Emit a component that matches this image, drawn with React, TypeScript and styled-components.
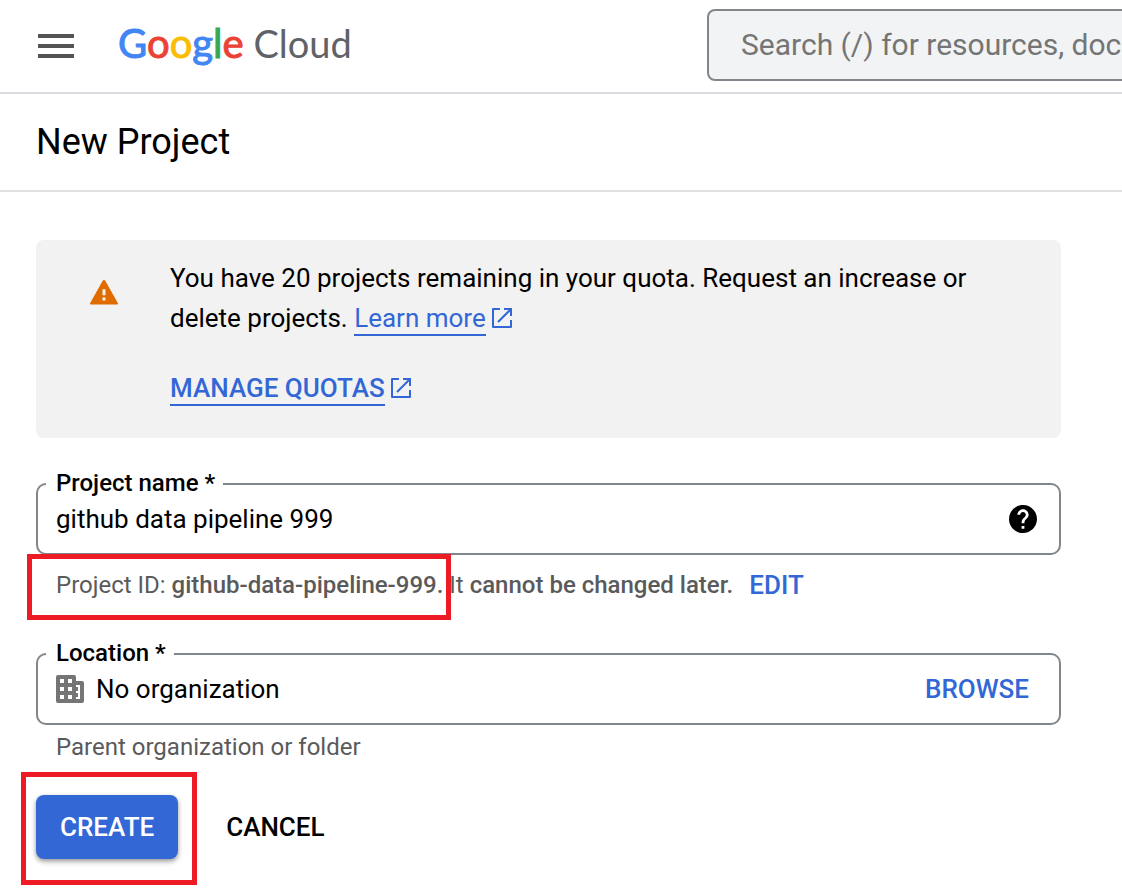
import React from "react";
import styled, { createGlobalStyle } from "styled-components";
import { MdHelp } from "react-icons/md";

const blue = "#3367d6";
const red = "#ed1c24";

const GlobalStyle = createGlobalStyle`
  * { box-sizing: border-box; }
  body {
    margin: 0;
    background: #fff;
    color: #000;
    font-family: Roboto, "Liberation Sans", sans-serif;
    font-size: 26px;
    line-height: 40px;
  }
  button, input { font: inherit; }
`;

const Header = styled.header`
  display: flex;
  align-items: center;
  height: 94px;
  padding: 0 0 2px 38px;
  border-bottom: 2px solid #dadae0;
  overflow: hidden;
`;

const MenuButton = styled.button`
  flex: none;
  display: flex;
  padding: 2px 0 0;
  border: 0;
  background: none;
  cursor: pointer;
`;

const LogoArea = styled.div`
  flex: none;
  width: 633px;
  padding: 0 0 4px 44px;
`;

const Logo = styled.a`
  color: #5f6368;
  font: 38px/56px Lato, sans-serif;
  text-decoration: none;
  white-space: nowrap;
`;

const Letter = styled.span<{ $color: string }>`
  color: ${(p) => p.$color};
  font-size: 40px;
  -webkit-text-stroke: 1px ${(p) => p.$color};
`;

const Search = styled.input`
  flex: none;
  width: 1440px;
  height: 72px;
  padding: 0 32px 2px;
  border: 2px solid #80868b;
  border-radius: 8px;
  background: #f1f3f4;
  font-size: 30px;
  &::placeholder { color: #757575; opacity: 1; }
`;

const TitleBar = styled.div`
  padding: 24px 36px;
  border-bottom: 2px solid #e0e0e0;
`;

const Title = styled.h1`
  margin: 0;
  font-size: 36px;
  line-height: 48px;
  font-weight: 400;
`;

const Main = styled.main`
  padding: 48px 61px 36px 36px;
`;

const Notice = styled.section`
  display: flex;
  gap: 52px;
  padding: 18px 54px 30px;
  border-radius: 8px;
  background: #f2f2f2;
`;

const NoticeIcon = styled.div`
  flex: none;
  display: flex;
  padding-top: 22px;
  color: #e06c00;
`;

const NoticeText = styled.p`
  margin: 0 0 30px;
`;

const TextLink = styled.a<{ $strong?: boolean }>`
  color: ${blue};
  font-weight: ${(p) => (p.$strong ? 500 : 400)};
  text-decoration: none;
  white-space: nowrap;
  svg {
    margin-left: 5px;
    vertical-align: -2px;
  }
`;

const LinkLabel = styled.span`
  padding-bottom: 1px;
  border-bottom: 2px solid ${blue};
`;

const Form = styled.form`
  padding-top: 45px;
`;

const Field = styled.div`
  position: relative;
  display: flex;
  align-items: center;
  gap: 12px;
  height: 72px;
  padding: 0 22px 0 18px;
  border: 2px solid #80868b;
  border-radius: 10px;
`;

const FieldLabel = styled.label`
  position: absolute;
  top: -16px;
  left: 8px;
  padding: 0 8px 0 10px;
  background: #fff;
  font-size: 24px;
  line-height: 28px;
  font-weight: 500;
`;

const FieldInput = styled.input`
  flex: 1;
  min-width: 0;
  padding: 0;
  border: 0;
  outline: 0;
  background: none;
  color: #000;
`;

const IconButton = styled.button`
  display: flex;
  padding: 0;
  border: 0;
  background: none;
  color: #000;
  cursor: pointer;
`;

const TextButton = styled.button<{ $color?: string }>`
  padding: 0 8px;
  border: 0;
  background: none;
  color: ${(p) => p.$color ?? blue};
  font-weight: 500;
  line-height: 40px;
  cursor: pointer;
`;

const Hint = styled.div`
  position: relative;
  display: flex;
  align-items: center;
  gap: 8px;
  padding-left: 20px;
  color: #5a5a5a;
  font-size: 24px;
  b { font-weight: 500; }
`;

const IdHint = styled(Hint)`
  padding-top: 10px;
  margin-bottom: 48px;
  button { font-size: 26px; }
`;

const LocationHint = styled(Hint)`
  padding-top: 2px;
`;

const Actions = styled.div`
  position: relative;
  display: flex;
  align-items: center;
  gap: 40px;
  margin-top: 28px;
`;

const CreateButton = styled.button`
  height: 64px;
  padding: 0 24px;
  border: 0;
  border-radius: 8px;
  background: ${blue};
  color: #fff;
  font-weight: 500;
  box-shadow: 0 2px 4px rgba(0, 0, 0, 0.3), 0 3px 6px rgba(0, 0, 0, 0.15);
  cursor: pointer;
`;

const Highlight = styled.span<{ $top: number; $left: number; $width: number; $height: number }>`
  position: absolute;
  top: ${(p) => p.$top}px;
  left: ${(p) => p.$left}px;
  width: ${(p) => p.$width}px;
  height: ${(p) => p.$height}px;
  border: 5px solid ${red};
  pointer-events: none;
`;

const WarningIcon = () => (
  <svg width="28" height="25" viewBox="0 0 28 25" fill="currentColor" fillRule="evenodd" aria-hidden="true">
    <path d="M12.7.8a1.5 1.5 0 0 1 2.6 0l12.5 22.2a1 1 0 0 1-.9 1.6H1.1a1 1 0 0 1-.9-1.6zM12.5 9.3v6h3v-6zM12.5 17.6v3h3v-3z" />
  </svg>
);

const ExternalIcon = () => (
  <svg width="22" height="22" viewBox="0 0 22 22" fill="none" stroke="currentColor" strokeWidth="2" aria-hidden="true">
    <path strokeLinejoin="round" d="M9 2H2v18h18v-7" />
    <path d="M13 2h7v7M20 2L7 15" />
  </svg>
);

const OrganizationIcon = () => (
  <svg width="28" height="28" viewBox="0 0 28 28" fill="#757575" fillRule="evenodd" aria-hidden="true">
    <path d="M2 0h16a2 2 0 0 1 2 2v4h6a2 2 0 0 1 2 2v18a2 2 0 0 1-2 2H2a2 2 0 0 1-2-2V2a2 2 0 0 1 2-2zM4 4v4h4V4zM12 4v4h4V4zM4 12v4h4v-4zM12 12v4h4v-4zM4 20v4h4v-4zM12 20v4h4v-4zM20 10v2h2v4h-2v2h2v4h-2v2h4V10z" />
  </svg>
);

export default function App() {
  return (
    <>
      <GlobalStyle />
      <Header>
        <MenuButton aria-label="Navigation menu">
          <svg width="36" height="24" fill="#545454" aria-hidden="true">
            <path d="M0 0h36v4H0zM0 10h36v4H0zM0 20h36v4H0z" />
          </svg>
        </MenuButton>
        <LogoArea>
          <Logo href="#" aria-label="Google Cloud">
            <Letter $color="#4285f4">G</Letter>
            <Letter $color="#ea4335">o</Letter>
            <Letter $color="#fbbc04">o</Letter>
            <Letter $color="#4285f4">g</Letter>
            <Letter $color="#34a853">l</Letter>
            <Letter $color="#ea4335">e</Letter>
            {" Cloud"}
          </Logo>
        </LogoArea>
        <Search type="search" aria-label="Search" placeholder="Search (/) for resources, docs, products, and more" />
      </Header>
      <TitleBar>
        <Title>New Project</Title>
      </TitleBar>
      <Main>
        <Notice>
          <NoticeIcon>
            <WarningIcon />
          </NoticeIcon>
          <div>
            <NoticeText>
              You have 20 projects remaining in your quota. Request an increase or delete projects.{" "}
              <TextLink href="#">
                <LinkLabel>Learn more</LinkLabel>
                <ExternalIcon />
              </TextLink>
            </NoticeText>
            <TextLink href="#" $strong>
              <LinkLabel>MANAGE QUOTAS</LinkLabel>
              <ExternalIcon />
            </TextLink>
          </div>
        </Notice>
        <Form onSubmit={(e) => e.preventDefault()}>
          <Field>
            <FieldLabel htmlFor="project-name">Project name *</FieldLabel>
            <FieldInput id="project-name" defaultValue="github data pipeline 999" />
            <IconButton type="button" aria-label="Help">
              <MdHelp size={28} viewBox="2 2 20 20" />
            </IconButton>
          </Field>
          <IdHint>
            <span>
              Project ID: <b>github-data-pipeline-999.</b> It <b>cannot be changed later.</b>
            </span>
            <TextButton type="button">EDIT</TextButton>
            <Highlight $top={-1} $left={-9} $width={424} $height={66} aria-hidden="true" />
          </IdHint>
          <Field>
            <FieldLabel htmlFor="location">Location *</FieldLabel>
            <OrganizationIcon />
            <FieldInput id="location" defaultValue="No organization" readOnly />
            <TextButton type="button">BROWSE</TextButton>
          </Field>
          <LocationHint>Parent organization or folder</LocationHint>
          <Actions>
            <CreateButton type="submit">CREATE</CreateButton>
            <TextButton type="button" $color="#000">CANCEL</TextButton>
            <Highlight $top={-23} $left={-15} $width={176} $height={113} aria-hidden="true" />
          </Actions>
        </Form>
      </Main>
    </>
  );
}
